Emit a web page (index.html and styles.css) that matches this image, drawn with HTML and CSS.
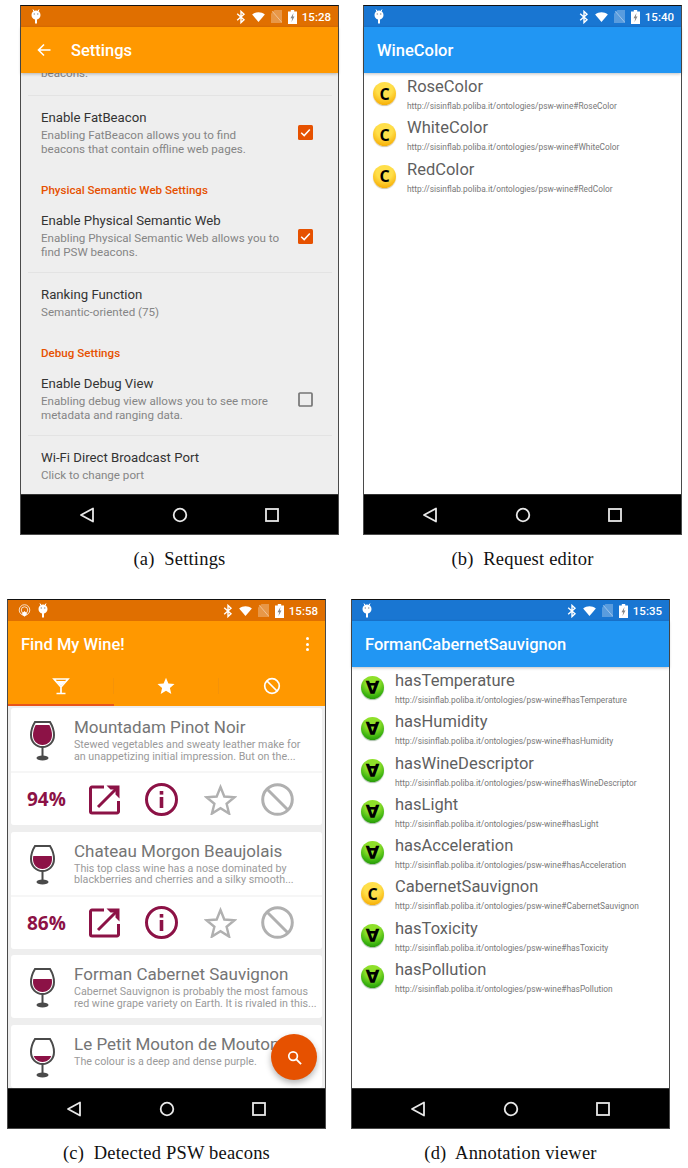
FILE: index.html
```html
<!DOCTYPE html>
<html lang="en">
<head>
    <meta charset="UTF-8">
    <meta name="viewport" content="width=device-width, initial-scale=1.0">
    <title>Physical Semantic Web screens</title>
    <link rel="stylesheet" href="styles.css">
</head>
<body>
    <svg class="defs" aria-hidden="true">
        <defs>
            <symbol id="i-debug" viewBox="0 0 10 15">
                <path d="M2 .5 3 2.500M8 .5 7 2.500" stroke="#fff" stroke-width="1" fill="none"/>
                <path d="M5 1.500a4.500 4.500 0 0 1 4.500 4.500c0 2.400-1.700 4-3.500 4.400V14.500H4v-4.100C2.200 10 .5 8.400.5 6A4.500 4.500 0 0 1 5 1.500z" fill="#fff"/>
                <circle cx="3.300" cy="5" r=".8" fill="#999"/><circle cx="6.700" cy="5" r=".8" fill="#999"/>
            </symbol>
            <symbol id="i-beacon" viewBox="0 0 14 14">
                <circle cx="7" cy="6.500" r="5.700" fill="none" stroke="#fff" stroke-width="1" opacity=".85"/>
                <circle cx="7" cy="6.500" r="3.500" fill="none" stroke="#fff" stroke-width="1" opacity=".85"/>
                <path d="M7 7.500 10 10.700 7 13.800 4 10.700z" fill="#fff"/>
            </symbol>
            <symbol id="i-bt" viewBox="0 0 10 14">
                <path d="M1.200 3.800 8 9.800 5 12.600V1.400L8 4.200 1.200 10.200" fill="none" stroke="#fff" stroke-width="1.400"/>
            </symbol>
            <symbol id="i-wifi" viewBox="0 0 14 11">
                <path d="M0 2.800C4-.6 10-.6 14 2.800L7 11z" fill="#fff"/>
            </symbol>
            <symbol id="i-sim" viewBox="0 0 11 13">
                <path d="M3.500 0H11V13H0V3.500z" fill="#fff" opacity=".28"/>
                <path d="M1 1 11 12.500" stroke="#fff" stroke-width="1" opacity=".4"/>
            </symbol>
            <symbol id="i-batt" viewBox="0 0 9 14">
                <path d="M2.800 0h3.400v1.500H9V14H0V1.500h2.800z" fill="#fff"/>
                <path d="M5.500 3 2.500 8.200h1.700L3.500 12l3-5.400H4.800z" fill="#888"/>
            </symbol>
            <symbol id="i-back" viewBox="0 0 16 16">
                <path d="M14 1.500V14.500L2 8z" fill="none" stroke="#e8e8e8" stroke-width="1.800" stroke-linejoin="round"/>
            </symbol>
            <symbol id="i-home" viewBox="0 0 16 16">
                <circle cx="8" cy="8" r="6.300" fill="none" stroke="#e8e8e8" stroke-width="1.800"/>
            </symbol>
            <symbol id="i-recent" viewBox="0 0 16 16">
                <rect x="2" y="2" width="12" height="12" fill="none" stroke="#e8e8e8" stroke-width="1.800"/>
            </symbol>
            <symbol id="i-check" viewBox="0 0 15 15">
                <rect width="15" height="15" rx="1.500" fill="#e65100"/>
                <path d="M3.200 7.800 6.200 10.600 11.800 4.600" fill="none" stroke="#fff" stroke-width="1.500"/>
            </symbol>
            <symbol id="i-box" viewBox="0 0 15 15">
                <rect x="1" y="1" width="13" height="13" rx="1" fill="none" stroke="#757575" stroke-width="1.700"/>
            </symbol>
            <symbol id="i-glass" viewBox="0 0 25 40">
                <path d="M5 1H20C22.800 5.500 24 10.500 24 14 24 21 19 26 12.500 26 6 26 1 21 1 14 1 10.500 2.200 5.500 5 1z" fill="none" stroke="#4a4a4a" stroke-width="2"/>
                <path d="M12.500 26V36" stroke="#4a4a4a" stroke-width="2"/>
                <ellipse cx="12.500" cy="37" rx="6" ry="2.400" fill="#4a4a4a"/>
            </symbol>
            <clipPath id="bowl">
                <path d="M6 3.200H19C21 6.500 22 10.800 22 14 22 19.800 18 24 12.500 24 7 24 3 19.800 3 14 3 10.800 4 6.500 6 3.200z"/>
            </clipPath>
            <symbol id="i-out" viewBox="0 0 31 31">
                <path d="M15 3H3A1.500 1.500 0 0 0 1.500 4.500v23A1.500 1.500 0 0 0 3 29h25a1.500 1.500 0 0 0 1.500-1.500V17" fill="none" stroke="#8c1246" stroke-width="3"/>
                <path d="M9 23 27 5" stroke="#8c1246" stroke-width="3"/>
                <path d="M17.500 1.500H30.500V14.500L26.500 10.500V5.500H21.500z" fill="#8c1246"/>
            </symbol>
            <symbol id="i-info" viewBox="0 0 33 33">
                <circle cx="16.500" cy="16.500" r="15" fill="none" stroke="#8c1246" stroke-width="3"/>
                <rect x="14.700" y="8" width="3.600" height="3.600" fill="#8c1246"/>
                <rect x="14.700" y="14" width="3.600" height="11" fill="#8c1246"/>
            </symbol>
            <symbol id="i-star" viewBox="0 0 33 31">
                <path d="M16.500 3 20.300 12.500 30.500 13.200 22.600 19.700 25.100 29.600 16.500 24.200 7.900 29.600 10.400 19.700 2.500 13.200 12.700 12.500z" fill="none" stroke="#b0b0b0" stroke-width="2.400"/>
            </symbol>
            <symbol id="i-ban" viewBox="0 0 33 33">
                <circle cx="16.500" cy="16.500" r="14.800" fill="none" stroke="#b0b0b0" stroke-width="3"/>
                <path d="M6 6 27 27" stroke="#b0b0b0" stroke-width="3"/>
            </symbol>
        </defs>
    </svg>

    <div class="fig-row fig-row-top">
        <figure class="fig">
            <div class="phone">
                <div class="status status-orange">
                    <svg class="st-debug"><use href="#i-debug"/></svg>
                    <span class="st-right">
                        <svg class="st-bt"><use href="#i-bt"/></svg>
                        <svg class="st-wifi"><use href="#i-wifi"/></svg>
                        <svg class="st-sim"><use href="#i-sim"/></svg>
                        <svg class="st-batt"><use href="#i-batt"/></svg>
                        <span class="st-time">15:28</span>
                    </span>
                </div>
                <div class="toolbar toolbar-orange">
                    <svg class="back-arrow" viewBox="0 0 14 14"><path d="M13.500 7H1.500M7 1.500 1.500 7 7 12.500" fill="none" stroke="#fff" stroke-width="1.600"/></svg>
                    <span class="toolbar-title">Settings</span>
                </div>
                <div class="content settings">
                    <div class="pref pref-cut">
                        <p class="pref-sum">beacons.</p>
                    </div>
                    <div class="pref">
                        <div class="pref-text">
                            <p class="pref-title">Enable FatBeacon</p>
                            <p class="pref-sum">Enabling FatBeacon allows you to find<br>beacons that contain offline web pages.</p>
                        </div>
                        <svg class="pref-box"><use href="#i-check"/></svg>
                    </div>
                    <p class="pref-head">Physical Semantic Web Settings</p>
                    <div class="pref pref-line">
                        <div class="pref-text">
                            <p class="pref-title">Enable Physical Semantic Web</p>
                            <p class="pref-sum">Enabling Physical Semantic Web allows you to<br>find PSW beacons.</p>
                        </div>
                        <svg class="pref-box"><use href="#i-check"/></svg>
                    </div>
                    <div class="pref">
                        <div class="pref-text">
                            <p class="pref-title">Ranking Function</p>
                            <p class="pref-sum">Semantic-oriented (75)</p>
                        </div>
                    </div>
                    <p class="pref-head">Debug Settings</p>
                    <div class="pref pref-line">
                        <div class="pref-text">
                            <p class="pref-title">Enable Debug View</p>
                            <p class="pref-sum">Enabling debug view allows you to see more<br>metadata and ranging data.</p>
                        </div>
                        <svg class="pref-box"><use href="#i-box"/></svg>
                    </div>
                    <div class="pref">
                        <div class="pref-text">
                            <p class="pref-title">Wi-Fi Direct Broadcast Port</p>
                            <p class="pref-sum">Click to change port</p>
                        </div>
                    </div>
                </div>
                <div class="nav">
                    <svg><use href="#i-back"/></svg>
                    <svg><use href="#i-home"/></svg>
                    <svg><use href="#i-recent"/></svg>
                </div>
            </div>
            <figcaption class="caption">(a)&nbsp; Settings</figcaption>
        </figure>

        <figure class="fig">
            <div class="phone">
                <div class="status status-blue">
                    <svg class="st-debug"><use href="#i-debug"/></svg>
                    <span class="st-right">
                        <svg class="st-bt"><use href="#i-bt"/></svg>
                        <svg class="st-wifi"><use href="#i-wifi"/></svg>
                        <svg class="st-sim"><use href="#i-sim"/></svg>
                        <svg class="st-batt"><use href="#i-batt"/></svg>
                        <span class="st-time">15:40</span>
                    </span>
                </div>
                <div class="toolbar toolbar-blue">
                    <span class="toolbar-title">WineColor</span>
                </div>
                <div class="content onto-list">
                    <div class="onto-item">
                        <span class="owl owl-class">C</span>
                        <div><p class="onto-name">RoseColor</p><p class="onto-url">http://sisinflab.poliba.it/ontologies/psw-wine#RoseColor</p></div>
                    </div>
                    <div class="onto-item">
                        <span class="owl owl-class">C</span>
                        <div><p class="onto-name">WhiteColor</p><p class="onto-url">http://sisinflab.poliba.it/ontologies/psw-wine#WhiteColor</p></div>
                    </div>
                    <div class="onto-item">
                        <span class="owl owl-class">C</span>
                        <div><p class="onto-name">RedColor</p><p class="onto-url">http://sisinflab.poliba.it/ontologies/psw-wine#RedColor</p></div>
                    </div>
                </div>
                <div class="nav">
                    <svg><use href="#i-back"/></svg>
                    <svg><use href="#i-home"/></svg>
                    <svg><use href="#i-recent"/></svg>
                </div>
            </div>
            <figcaption class="caption">(b)&nbsp; Request editor</figcaption>
        </figure>
    </div>

    <div class="fig-row fig-row-bottom">
        <figure class="fig">
            <div class="phone">
                <div class="status status-orange">
                    <svg class="st-beacon"><use href="#i-beacon"/></svg>
                    <svg class="st-debug st-debug-next"><use href="#i-debug"/></svg>
                    <span class="st-right">
                        <svg class="st-bt"><use href="#i-bt"/></svg>
                        <svg class="st-wifi"><use href="#i-wifi"/></svg>
                        <svg class="st-sim"><use href="#i-sim"/></svg>
                        <svg class="st-batt"><use href="#i-batt"/></svg>
                        <span class="st-time">15:58</span>
                    </span>
                </div>
                <div class="toolbar-tall">
                    <div class="toolbar-row">
                        <span class="toolbar-title">Find My Wine!</span>
                        <span class="kebab"><i></i><i></i><i></i></span>
                    </div>
                    <div class="tabs">
                        <div class="tab tab-on">
                            <svg class="tab-icon" viewBox="0 0 18 18"><path d="M2 2H16L9 10zM9 10V16M4.500 16.500H13.500" fill="none" stroke="#fff" stroke-width="1.700"/><path d="M4.500 4H13.500L9 9z" fill="#fff"/></svg>
                        </div>
                        <div class="tab">
                            <svg class="tab-icon" viewBox="0 0 18 18"><path d="M9 .8 11.400 6.500 17.500 7 12.900 11 14.300 17 9 13.800 3.700 17 5.100 11 .5 7 6.600 6.500z" fill="#fff"/></svg>
                        </div>
                        <div class="tab">
                            <svg class="tab-icon" viewBox="0 0 18 18"><circle cx="9" cy="9" r="7.300" fill="none" stroke="#fff" stroke-width="1.700"/><path d="M4 4 14 14" stroke="#fff" stroke-width="1.700"/></svg>
                        </div>
                    </div>
                </div>
                <div class="content beacons">
                    <div class="card">
                        <div class="card-top">
                            <svg class="glass" viewBox="0 0 25 40"><rect class="wine" x="0" y="4" width="25" height="22" clip-path="url(#bowl)"/><use href="#i-glass" width="25" height="40"/></svg>
                            <div class="card-text">
                                <p class="wine-name">Mountadam Pinot Noir</p>
                                <p class="wine-desc">Stewed vegetables and sweaty leather make for<br>an unappetizing initial impression. But on the...</p>
                            </div>
                        </div>
                        <div class="card-actions">
                            <span class="match">94%</span>
                            <svg class="act act-out"><use href="#i-out"/></svg>
                            <svg class="act act-info"><use href="#i-info"/></svg>
                            <svg class="act act-star"><use href="#i-star"/></svg>
                            <svg class="act act-ban"><use href="#i-ban"/></svg>
                        </div>
                    </div>
                    <div class="card">
                        <div class="card-top">
                            <svg class="glass" viewBox="0 0 25 40"><rect class="wine" x="0" y="11" width="25" height="15" clip-path="url(#bowl)"/><use href="#i-glass" width="25" height="40"/></svg>
                            <div class="card-text">
                                <p class="wine-name">Chateau Morgon Beaujolais</p>
                                <p class="wine-desc">This top class wine has a nose dominated by<br>blackberries and cherries and a silky smooth...</p>
                            </div>
                        </div>
                        <div class="card-actions">
                            <span class="match">86%</span>
                            <svg class="act act-out"><use href="#i-out"/></svg>
                            <svg class="act act-info"><use href="#i-info"/></svg>
                            <svg class="act act-star"><use href="#i-star"/></svg>
                            <svg class="act act-ban"><use href="#i-ban"/></svg>
                        </div>
                    </div>
                    <div class="card">
                        <div class="card-top">
                            <svg class="glass" viewBox="0 0 25 40"><rect class="wine" x="0" y="11" width="25" height="15" clip-path="url(#bowl)"/><use href="#i-glass" width="25" height="40"/></svg>
                            <div class="card-text">
                                <p class="wine-name">Forman Cabernet Sauvignon</p>
                                <p class="wine-desc">Cabernet Sauvignon is probably the most famous<br>red wine grape variety on Earth. It is rivaled in this...</p>
                            </div>
                        </div>
                    </div>
                    <div class="card">
                        <div class="card-top">
                            <svg class="glass" viewBox="0 0 25 40"><rect class="wine" x="0" y="18" width="25" height="8" clip-path="url(#bowl)"/><use href="#i-glass" width="25" height="40"/></svg>
                            <div class="card-text">
                                <p class="wine-name">Le Petit Mouton de Mouton</p>
                                <p class="wine-desc">The colour is a deep and dense purple.</p>
                            </div>
                        </div>
                    </div>
                    <div class="fab">
                        <svg viewBox="0 0 16 16"><circle cx="6.500" cy="6.500" r="4.600" fill="none" stroke="#fff" stroke-width="1.800"/><path d="M10 10 15 15" stroke="#fff" stroke-width="2"/></svg>
                    </div>
                </div>
                <div class="nav">
                    <svg><use href="#i-back"/></svg>
                    <svg><use href="#i-home"/></svg>
                    <svg><use href="#i-recent"/></svg>
                </div>
            </div>
            <figcaption class="caption">(c)&nbsp; Detected PSW beacons</figcaption>
        </figure>

        <figure class="fig">
            <div class="phone">
                <div class="status status-blue">
                    <svg class="st-debug"><use href="#i-debug"/></svg>
                    <span class="st-right">
                        <svg class="st-bt"><use href="#i-bt"/></svg>
                        <svg class="st-wifi"><use href="#i-wifi"/></svg>
                        <svg class="st-sim"><use href="#i-sim"/></svg>
                        <svg class="st-batt"><use href="#i-batt"/></svg>
                        <span class="st-time">15:35</span>
                    </span>
                </div>
                <div class="toolbar toolbar-blue">
                    <span class="toolbar-title">FormanCabernetSauvignon</span>
                </div>
                <div class="content onto-list">
                    <div class="onto-item">
                        <span class="owl owl-prop">∀</span>
                        <div><p class="onto-name">hasTemperature</p><p class="onto-url">http://sisinflab.poliba.it/ontologies/psw-wine#hasTemperature</p></div>
                    </div>
                    <div class="onto-item">
                        <span class="owl owl-prop">∀</span>
                        <div><p class="onto-name">hasHumidity</p><p class="onto-url">http://sisinflab.poliba.it/ontologies/psw-wine#hasHumidity</p></div>
                    </div>
                    <div class="onto-item">
                        <span class="owl owl-prop">∀</span>
                        <div><p class="onto-name">hasWineDescriptor</p><p class="onto-url">http://sisinflab.poliba.it/ontologies/psw-wine#hasWineDescriptor</p></div>
                    </div>
                    <div class="onto-item">
                        <span class="owl owl-prop">∀</span>
                        <div><p class="onto-name">hasLight</p><p class="onto-url">http://sisinflab.poliba.it/ontologies/psw-wine#hasLight</p></div>
                    </div>
                    <div class="onto-item">
                        <span class="owl owl-prop">∀</span>
                        <div><p class="onto-name">hasAcceleration</p><p class="onto-url">http://sisinflab.poliba.it/ontologies/psw-wine#hasAcceleration</p></div>
                    </div>
                    <div class="onto-item">
                        <span class="owl owl-class">C</span>
                        <div><p class="onto-name">CabernetSauvignon</p><p class="onto-url">http://sisinflab.poliba.it/ontologies/psw-wine#CabernetSauvignon</p></div>
                    </div>
                    <div class="onto-item">
                        <span class="owl owl-prop">∀</span>
                        <div><p class="onto-name">hasToxicity</p><p class="onto-url">http://sisinflab.poliba.it/ontologies/psw-wine#hasToxicity</p></div>
                    </div>
                    <div class="onto-item">
                        <span class="owl owl-prop">∀</span>
                        <div><p class="onto-name">hasPollution</p><p class="onto-url">http://sisinflab.poliba.it/ontologies/psw-wine#hasPollution</p></div>
                    </div>
                </div>
                <div class="nav">
                    <svg><use href="#i-back"/></svg>
                    <svg><use href="#i-home"/></svg>
                    <svg><use href="#i-recent"/></svg>
                </div>
            </div>
            <figcaption class="caption">(d)&nbsp; Annotation viewer</figcaption>
        </figure>
    </div>
</body>
</html>
```

FILE: styles.css
```css
* {
    margin: 0;
    padding: 0;
    box-sizing: border-box;
}

body {
    width: 688px;
    height: 1168px;
    overflow: hidden;
    background: #fff;
    font-family: 'Roboto', 'Liberation Sans', sans-serif;
}

.defs {
    position: absolute;
    width: 0;
    height: 0;
}

.fig-row {
    display: flex;
}

.fig-row-top {
    padding: 5px 0 0 20px;
    gap: 24px;
}

.fig-row-bottom {
    padding: 30px 0 0 7px;
    gap: 25px;
}

.fig {
    width: 319px;
}

.caption {
    margin-top: 14px;
    font-family: 'Liberation Serif', serif;
    font-size: 18.5px;
    letter-spacing: 0.2px;
    line-height: 20px;
    color: #111;
    text-align: center;
}

/* phone frame */
.phone {
    width: 319px;
    height: 530px;
    display: flex;
    flex-direction: column;
    border: 1px solid #4a4a4a;
    border-top-color: #111;
    background: #fff;
}

.status {
    height: 21px;
    flex: none;
    display: flex;
    align-items: center;
    padding: 0 7px 0 10px;
    color: #fff;
}

.status-orange { background: #e06f00; }
.status-blue { background: #1976d2; }

.st-debug {
    width: 10px;
    height: 15px;
}

.st-beacon {
    width: 13px;
    height: 13px;
}

.st-debug-next {
    margin-left: 7px;
}

.st-right {
    margin-left: auto;
    display: flex;
    align-items: center;
}

.st-bt { width: 10px; height: 14px; margin-right: 6px; }
.st-wifi { width: 13px; height: 10px; margin-right: 6px; }
.st-sim { width: 11px; height: 13px; margin-right: 6px; }
.st-batt { width: 9px; height: 14px; margin-right: 5px; }

.st-time {
    font-size: 11.5px;
    font-weight: 500;
}

.toolbar {
    height: 46px;
    flex: none;
    display: flex;
    align-items: center;
    padding-left: 13px;
    position: relative;
    z-index: 2;
    box-shadow: 0 1px 3px rgba(0, 0, 0, 0.25);
}

.toolbar-orange { background: #ff9800; }
.toolbar-blue { background: #2196f3; }

.toolbar-title {
    font-size: 16.5px;
    font-weight: 500;
    color: #fff;
}

.back-arrow {
    width: 14px;
    height: 14px;
    margin: 0 20px 0 3px;
}

.content {
    flex: 1;
    min-height: 0;
    overflow: hidden;
    position: relative;
}

.nav {
    height: 40px;
    flex: none;
    display: flex;
    justify-content: center;
    align-items: center;
    gap: 76.5px;
    background: #000;
    border-top: 1px solid #333;
}

.nav svg {
    width: 16px;
    height: 16px;
}

/* settings */
.settings {
    background: #eee;
    padding: 0 6px 0 7px;
}

.pref {
    display: flex;
    align-items: center;
    padding: 14px 19px 12.5px 13px;
}

.pref-cut {
    height: 29.5px;
    margin-top: -7px;
    padding: 0 0 0 13px;
    align-items: flex-start;
    border-bottom: 1px solid #e3e3e3;
}

.pref-line {
    border-bottom: 1px solid #e3e3e3;
}

.pref-text {
    flex: 1;
}

.pref-title {
    font-size: 13.2px;
    line-height: 16px;
    color: #333;
    margin-bottom: 2px;
}

.pref-sum {
    font-size: 11.6px;
    line-height: 14px;
    color: #858585;
}

.pref-head {
    padding: 14px 0 1px 13px;
    font-size: 11.6px;
    font-weight: 500;
    line-height: 16px;
    color: #e65100;
}

.pref-box {
    width: 15px;
    height: 15px;
    flex: none;
}

/* ontology lists */
.onto-list {
    background: #fff;
    padding-top: 3px;
}

.onto-item {
    display: flex;
    align-items: flex-start;
    height: 41.25px;
    padding-left: 9px;
    gap: 11px;
}

.owl {
    width: 23px;
    height: 23px;
    flex: none;
    margin-top: 6px;
    border-radius: 50%;
    display: flex;
    align-items: center;
    justify-content: center;
    color: #000;
    font-weight: 700;
}

.owl-class {
    font-family: 'Open Sans', sans-serif;
    font-size: 16px;
    background: radial-gradient(circle at 50% 30%, #ffdf4a 0 40%, #f8b60f 75%, #eda000 92%, #f7d77a 100%);
    box-shadow: 0 1px 1px rgba(120, 90, 0, 0.35);
}

.owl-prop {
    font-family: 'DejaVu Sans', sans-serif;
    font-size: 18px;
    background: radial-gradient(circle at 50% 25%, #8ee02a 0 35%, #3ab20f 70%, #1f8a06 92%, #8cc96a 100%);
    box-shadow: 0 1px 1px rgba(0, 70, 0, 0.35);
}

.onto-name {
    font-size: 16.5px;
    line-height: 22px;
    color: #5f5f5f;
}

.onto-url {
    margin-top: 2px;
    font-size: 8.33px;
    line-height: 12px;
    color: #777;
    white-space: nowrap;
}

/* beacon cards */
.toolbar-tall {
    height: 85px;
    flex: none;
    background: #ff9800;
}

.toolbar-row {
    height: 46px;
    display: flex;
    align-items: center;
    justify-content: space-between;
    padding: 0 16px 0 13px;
}

.kebab {
    display: flex;
    flex-direction: column;
    gap: 2.5px;
}

.kebab i {
    width: 3px;
    height: 3px;
    border-radius: 50%;
    background: #fff;
}

.tabs {
    height: 39px;
    display: grid;
    grid-template-columns: repeat(3, 1fr);
}

.tab {
    display: flex;
    align-items: center;
    justify-content: center;
    border-bottom: 2px solid transparent;
    background: linear-gradient(#f59308, #f59308) right center / 1px 16px no-repeat;
}

.tab:last-child {
    background: none;
}

.tab-on {
    border-bottom-color: #e8541a;
}

.tab-icon {
    width: 18px;
    height: 18px;
}

.beacons {
    background: #eee;
    padding: 2px 3px 0;
    display: flex;
    flex-direction: column;
    gap: 6.5px;
}

.card {
    flex: none;
    display: flex;
    flex-direction: column;
    gap: 2px;
    border-radius: 3px;
    background: #f6f6f6;
    overflow: hidden;
}

.card-top {
    height: 63px;
    background: #fff;
    display: flex;
    align-items: center;
    padding-left: 19px;
    gap: 19px;
}

.glass {
    width: 25px;
    height: 40px;
    flex: none;
    margin-top: 3px;
}

.wine {
    fill: #8c1246;
}

.card-text {
    align-self: flex-start;
    margin-top: 9px;
}

.wine-name {
    font-size: 17px;
    line-height: 20px;
    color: #757575;
    white-space: nowrap;
}

.wine-desc {
    margin-top: 2px;
    font-size: 10.7px;
    line-height: 11.5px;
    color: #9a9a9a;
    white-space: nowrap;
}

.card-actions {
    height: 52px;
    background: #fff;
    display: flex;
    align-items: center;
    padding-left: 16px;
}

.match {
    width: 40px;
    font-family: 'Open Sans', sans-serif;
    font-size: 19px;
    font-weight: 700;
    color: #8c1246;
    white-space: nowrap;
}

.act { flex: none; }
.act-out { width: 31px; height: 31px; margin-left: 22px; }
.act-info { width: 33px; height: 33px; margin-left: 25px; }
.act-star { width: 33px; height: 31px; margin-left: 26px; }
.act-ban { width: 33px; height: 33px; margin-left: 24px; }

.fab {
    position: absolute;
    right: 8px;
    bottom: 8px;
    width: 46px;
    height: 46px;
    border-radius: 50%;
    background: #e65100;
    box-shadow: 0 3px 6px rgba(0, 0, 0, 0.3);
    display: flex;
    align-items: center;
    justify-content: center;
}

.fab svg {
    width: 15px;
    height: 15px;
}
```
